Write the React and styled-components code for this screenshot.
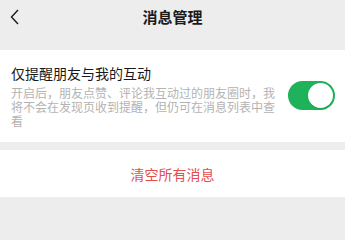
import React, { useState } from "react";
import styled, { createGlobalStyle } from "styled-components";

const Global = createGlobalStyle`
  html, body { margin: 0; padding: 0; background: #ededed; }
  body { font-family: "Noto Sans CJK SC", "Noto Sans", sans-serif; -webkit-font-smoothing: antialiased; }
  * { box-sizing: border-box; }
`;

const Page = styled.div`
  width: 345px;
  height: 222px;
  background: #ededed;
  overflow: hidden;
`;

const NavBar = styled.div`
  height: 34px;
  display: grid;
  grid-template-columns: 40px 1fr 40px;
  align-items: center;
  margin-bottom: 16px;
`;

const Back = styled.button`
  border: 0;
  background: none;
  padding: 0 0 0 10px;
  height: 34px;
  display: flex;
  align-items: center;
  cursor: pointer;
`;

const Title = styled.div`
  text-align: center;
  font-size: 15px;
  font-weight: 700;
  color: #1b1b1b;
  line-height: 34px;
`;

const Section = styled.div`
  background: #ffffff;
  margin-bottom: ${(p) => p.$gap || 0}px;
`;

const SettingRow = styled.div`
  display: flex;
  align-items: center;
  gap: 11px;
  padding: 13px 10px 14px 11px;
`;

const TextBlock = styled.div`
  flex: 1;
  min-width: 0;
`;

const Label = styled.div`
  font-size: 14px;
  line-height: 20px;
  color: #191919;
  margin-bottom: 3px;
`;

const Desc = styled.div`
  font-size: 12px;
  line-height: 14px;
  color: #b3b3b3;
`;

const Switch = styled.button`
  flex: none;
  width: 47px;
  height: 29px;
  border-radius: 15px;
  border: 0;
  padding: 2px;
  background: ${(p) => (p.$on ? "#1eb35b" : "#e5e5e5")};
  display: flex;
  justify-content: ${(p) => (p.$on ? "flex-end" : "flex-start")};
  align-items: center;
  cursor: pointer;
`;

const Knob = styled.span`
  width: 25px;
  height: 25px;
  border-radius: 50%;
  background: #fff;
  box-shadow: 0 1px 2px rgba(0, 0, 0, 0.12);
`;

const DangerButton = styled.button`
  width: 100%;
  height: 47px;
  border: 0;
  background: #fff;
  color: #e64d4d;
  font-family: inherit;
  font-size: 14px;
  display: flex;
  align-items: center;
  justify-content: center;
  cursor: pointer;
`;

export default function App() {
  const [on, setOn] = useState(true);
  return (
    <Page>
      <Global />
      <NavBar>
        <Back aria-label="返回">
          <svg width="9" height="16" viewBox="0 0 9 16">
            <path d="M8 1 L1.5 8 L8 15" fill="none" stroke="#1b1b1b" strokeWidth="1.4" />
          </svg>
        </Back>
        <Title>消息管理</Title>
        <span />
      </NavBar>
      <Section $gap={8}>
        <SettingRow>
          <TextBlock>
            <Label>仅提醒朋友与我的互动</Label>
            <Desc>开启后，朋友点赞、评论我互动过的朋友圈时，我将不会在发现页收到提醒，但仍可在消息列表中查看</Desc>
          </TextBlock>
          <Switch $on={on} onClick={() => setOn(!on)} aria-label="切换">
            <Knob />
          </Switch>
        </SettingRow>
      </Section>
      <Section>
        <DangerButton>清空所有消息</DangerButton>
      </Section>
    </Page>
  );
}
